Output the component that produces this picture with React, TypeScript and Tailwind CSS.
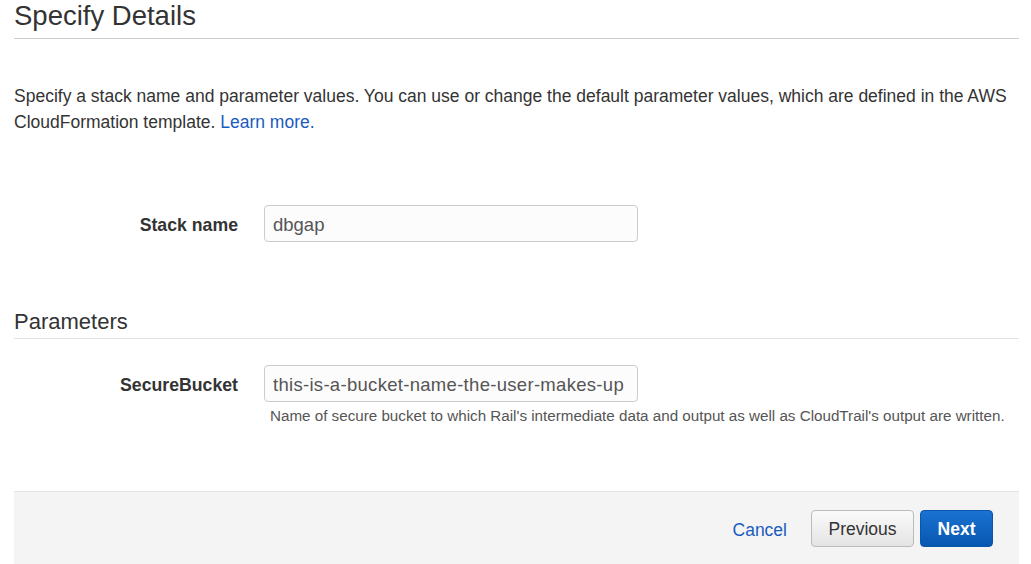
export default function App() {
  return (
    <div className="min-h-screen bg-white" style={{ fontFamily: '"Liberation Sans", Arial, sans-serif' }}>
      <div className="ml-[14px] w-[1005px] text-[#333]">
        {/* Page title */}
        <h1 className="text-[27.5px] leading-[32px] pb-[6px] border-b border-[#cccccc] font-normal">Specify Details</h1>

        <p className="mt-[44px] text-[17.5px] leading-[26px]">
          Specify a stack name and parameter values. You can use or change the default parameter values, which are defined in the AWS CloudFormation template.{' '}
          <a href="#" className="text-[#1a5bbf]">Learn more.</a>
        </p>

        {/* Stack name */}
        <div className="mt-[70px] flex items-center">
          <label className="w-[224px] pt-[3px] text-right text-[17.7px] font-bold">Stack name</label>
          <input
            readOnly
            value="dbgap"
            className="ml-[26px] w-[374px] h-[37px] px-[8px] pt-[2px] text-[18.5px] text-[#555] bg-[#fcfcfc] border border-[#cccccc] rounded-[4px] outline-none"
          />
        </div>

        {/* Parameters */}
        <h2 className="mt-[66px] text-[22px] leading-[28px] pb-[2px] border-b border-[#e2e2e2] font-normal">Parameters</h2>

        <div className="mt-[26px] flex items-center">
          <label className="w-[224px] pt-[3px] text-right text-[17.7px] font-bold">SecureBucket</label>
          <input
            readOnly
            value="this-is-a-bucket-name-the-user-makes-up"
            className="ml-[26px] w-[374px] h-[37px] px-[8px] pt-[2px] text-[18.5px] tracking-[0.3px] text-[#555] bg-[#fcfcfc] border border-[#cccccc] rounded-[4px] outline-none"
          />
        </div>
        <div className="ml-[256px] mt-[4px] text-[15.2px] leading-[20px] text-[#555]">
          Name of secure bucket to which Rail's intermediate data and output as well as CloudTrail's output are written.
        </div>

        {/* Footer actions */}
        <div className="mt-[65px] h-[73px] bg-[#f4f4f4] border-t border-[#e2e2e2] flex items-center justify-end pr-[26px]">
          <a href="#" className="pt-[4px] text-[17.5px] text-[#1a5bbf] mr-[24px]">Cancel</a>
          <button className="h-[37px] w-[103px] pt-[3px] text-[17.5px] text-[#333] rounded-[4px] border border-[#bbbbbb] bg-gradient-to-b from-[#fafafa] to-[#e4e4e4]">
            Previous
          </button>
          <button className="ml-[6px] h-[37px] w-[73px] pt-[3px] text-[17.5px] font-bold text-white rounded-[4px] border border-[#0b56a8] bg-gradient-to-b from-[#1b72d2] to-[#0657b0]">
            Next
          </button>
        </div>
      </div>
    </div>
  );
}
